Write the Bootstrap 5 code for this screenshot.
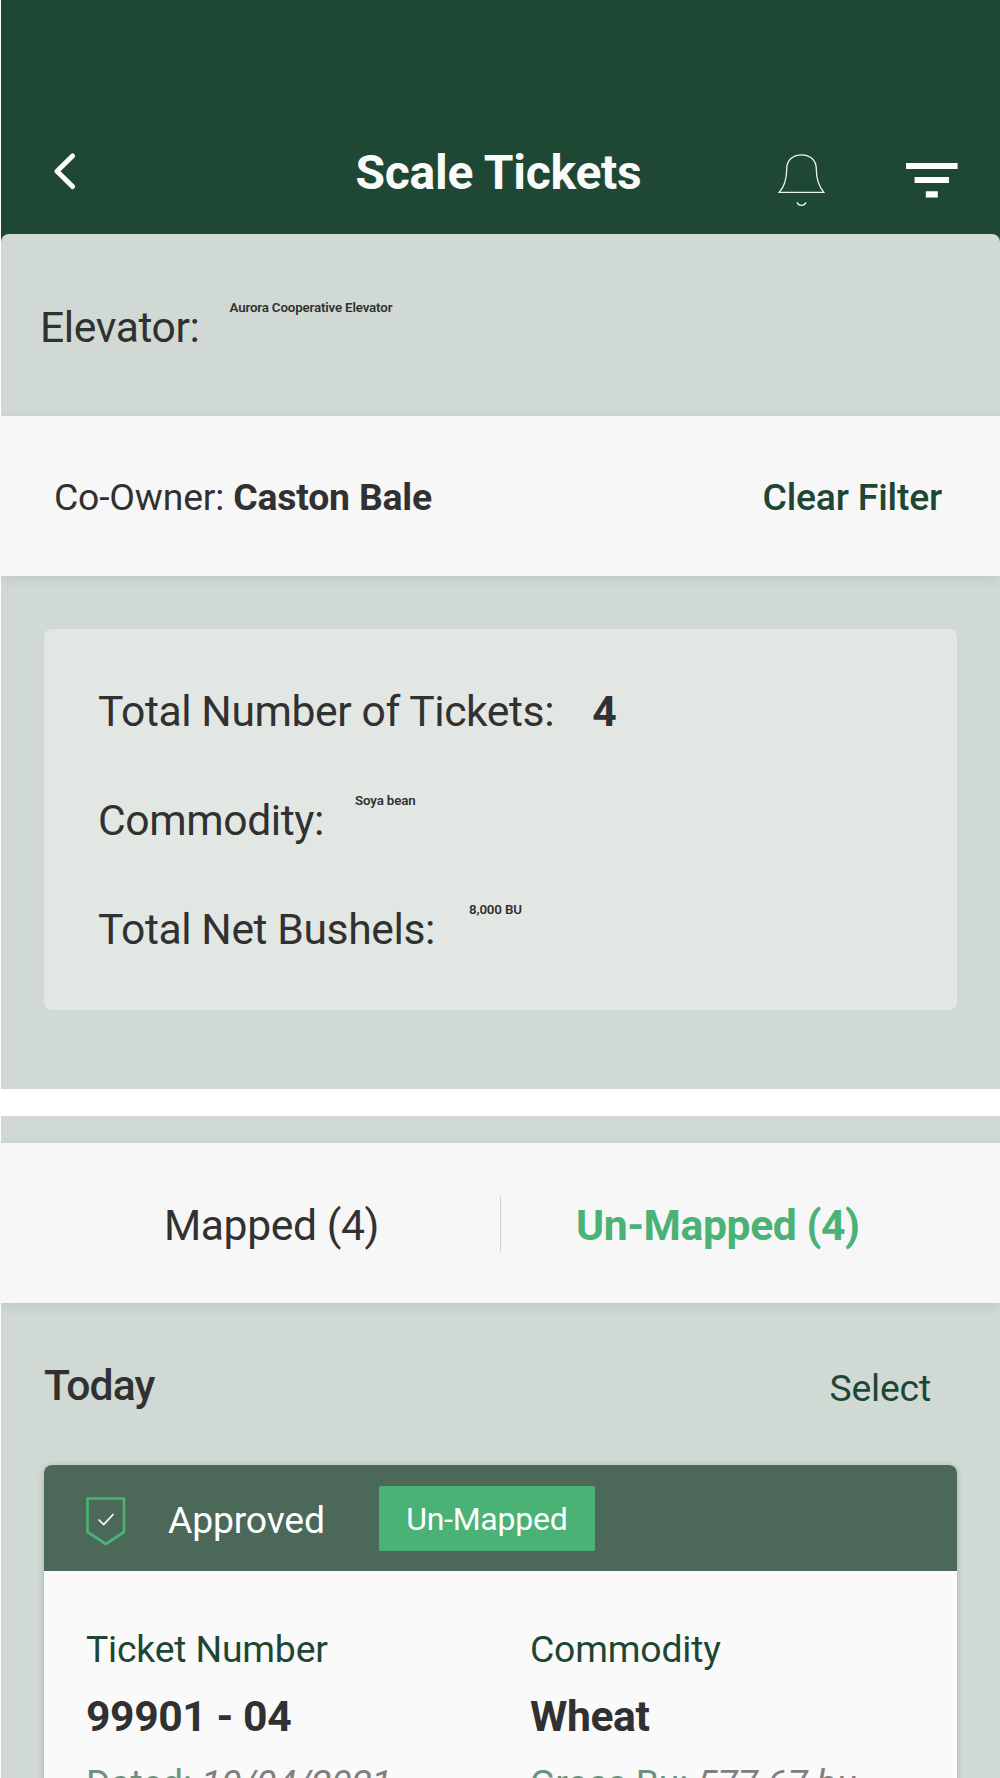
<!DOCTYPE html>
<html lang="en">
<head>
<meta charset="utf-8">
<meta name="viewport" content="width=device-width, initial-scale=1">
<title>Scale Tickets</title>
<link rel="stylesheet" href="https://cdn.jsdelivr.net/npm/bootstrap@5.3.0/dist/css/bootstrap.min.css">
<style>
  body { font-family: Roboto, "Liberation Sans", sans-serif; color: #313131; background: #fff; padding-left: 1px; height: 1778px; overflow: hidden; }
  .fs-title { font-size: 48px; line-height: 56px; padding: 2px 4px 0 0; letter-spacing: -.22px; }
  .fs-big { font-size: 42.67px; line-height: 50px; letter-spacing: -.41px; }
  .fs-mid { font-size: 37.33px; line-height: 44px; letter-spacing: -.18px; }
  .fs-tag { font-size: 32px; line-height: 38px; letter-spacing: -.26px; }
  .fs-tiny { font-size: 13.33px; line-height: 16px; font-weight: 600; letter-spacing: -.16px; }
  .medium { font-weight: 500; }
  .text-forest { color: #1d4733; }
  .text-leaf { color: #4ab274; }
  .bg-forest { background: #1e4834; }
  .bg-sage { background: #d0d9d3; }
  .topbar { display: grid; grid-template-columns: 1fr auto 1fr; height: 234px; padding-top: 110px; color: #fafafa; }
  .back { padding-left: 52px; }
  .actions { padding: 16px 42px 0 0; }
  .panel-top { height: 182px; border-radius: 8px 8px 0 0; padding: 66px 0 0 39px; }
  .panel-top .fs-big { margin-top: 2px; }
  .panel-top .fs-tiny { margin-left: 30px; }
  .bar { position: relative; background: #f7f7f7; box-shadow: 0 3px 12px rgba(0,0,0,.09); height: 160px; }
  .owner-bar { padding: 2px 58px 0 53px; margin-bottom: 53px; }
  .upper { height: 673px; }
  .summary { background: #e2e7e3; border-radius: 8px; margin: 0 43px; height: 381px; padding: 55px 0 0 54px; }
  .summary-row { height: 109px; }
  .summary-row .fs-big { margin-top: 2px; }
  .count { margin-left: 38px; }
  .crop-name { margin-left: 31px; }
  .net-total { margin-left: 34px; }
  .lower { margin-top: 27px; padding-top: 27px; height: 700px; }
  .tab-link { padding-top: 3px; }
  .tab-first { width: 499px; padding-left: 163px; }
  .tab-second { padding-left: 75px; }
  .divider { width: 1px; height: 56px; margin-top: 1px; background: #d0d0d0; }
  .day-row { height: 162px; padding: 0 69px 0 43px; }
  .day-name { letter-spacing: -.9px; padding-top: 2px; }
  .ticket { margin: 0 43px; height: 330px; border-radius: 8px; background: #fafafa; box-shadow: 0 1px 6px rgba(0,0,0,.2); overflow: hidden; }
  .ticket-head { height: 106px; background: #4b6858; padding-left: 42px; }
  .approved { margin-left: 42px; padding-top: 4px; }
  .tag { background: #4ab274; width: 216px; height: 65px; border-radius: 2px; color: #fff; margin-left: 54px; padding-top: 2px; }
  .ticket-body { padding: 56px 0 0 42px; }
  .ticket-col { width: 444px; }
  .ticket-value { margin: 20px 0; }
  .label-soft { color: #70907f; }
  .value-soft { color: #808080; }
</style>
</head>
<body>
<div class="bg-forest">
  <header class="topbar align-items-center">
    <div class="back">
      <svg width="22" height="40" viewBox="0 0 22 40" class="d-block" fill="none" stroke="#fff" stroke-width="5" stroke-linecap="round" stroke-linejoin="round"><path d="M19.500 4 4 19.200 19.500 34.500"/></svg>
    </div>
    <h1 class="fs-title fw-bold m-0">Scale Tickets</h1>
    <div class="actions d-flex justify-content-end">
      <svg width="180" height="60" viewBox="778 150 180 60" class="d-block" fill="none">
        <path d="M779.300 192.300C785 186 786.700 178 786.700 169C786.700 160 793 154.800 801.500 154.800S816.300 160 816.300 169C816.300 178 818.500 186 823.800 192.300ZM797 202.200C798.500 206.300 804.500 206.300 806 202.200" stroke="#eef2ef" stroke-width="1.300"/>
        <path d="M906 163h51.600v6H906zM914.600 177h34.400v6h-34.400zM925.800 191.300h12v6.200h-12z" fill="#fff"/>
      </svg>
    </div>
  </header>
  <section class="panel-top bg-sage d-flex align-items-start">
    <span class="fs-big">Elevator:</span>
    <span class="fs-tiny">Aurora Cooperative Elevator</span>
  </section>
</div>
<section class="upper bg-sage">
  <div class="bar owner-bar d-flex align-items-center justify-content-between">
    <span class="fs-mid">Co-Owner: <b>Caston Bale</b></span>
    <a class="fs-mid medium text-forest text-decoration-none" href="#">Clear Filter</a>
  </div>
  <div class="summary">
    <div class="summary-row d-flex align-items-start"><span class="fs-big">Total Number of Tickets:</span><b class="fs-big count">4</b></div>
    <div class="summary-row d-flex align-items-start"><span class="fs-big">Commodity:</span><span class="fs-tiny crop-name">Soya bean</span></div>
    <div class="summary-row d-flex align-items-start"><span class="fs-big">Total Net Bushels:</span><span class="fs-tiny net-total">8,000 BU</span></div>
  </div>
</section>
<section class="lower bg-sage">
  <nav class="bar d-flex align-items-center">
    <a class="tab-link tab-first fs-big text-reset text-decoration-none" href="#">Mapped (4)</a>
    <span class="divider"></span>
    <a class="tab-link tab-second fs-big fw-bold text-leaf text-decoration-none" href="#">Un-Mapped (4)</a>
  </nav>
  <div class="day-row d-flex justify-content-between align-items-center">
    <h2 class="day-name fs-big medium m-0">Today</h2>
    <a class="fs-mid text-forest text-decoration-none pt-2" href="#">Select</a>
  </div>
  <article class="ticket">
    <div class="ticket-head d-flex align-items-center">
      <svg class="mt-2" width="40" height="50" viewBox="0 0 40 50" fill="none"><path d="M1.500 1.500h36.500v33.500L19.800 47 1.500 35Z" stroke="#4ab274" stroke-width="2.700" stroke-linejoin="round"/><path d="m12.500 22.500 5.200 5L27.500 17" stroke="#fff" stroke-width="1.600"/></svg>
      <span class="approved fs-mid text-white">Approved</span>
      <span class="tag fs-tag d-flex align-items-center justify-content-center">Un-Mapped</span>
    </div>
    <div class="ticket-body d-flex">
      <div class="ticket-col">
        <div class="fs-mid text-forest">Ticket Number</div>
        <div class="ticket-value fs-big fw-bold">99901 - 04</div>
        <div class="fs-mid label-soft">Dated: <i class="value-soft">10/04/2021</i></div>
      </div>
      <div>
        <div class="fs-mid text-forest">Commodity</div>
        <div class="ticket-value fs-big fw-bold">Wheat</div>
        <div class="fs-mid label-soft">Gross Bu: <i class="value-soft">577.67 bu</i></div>
      </div>
    </div>
  </article>
</section>
<script src="https://cdn.jsdelivr.net/npm/bootstrap@5.3.0/dist/js/bootstrap.bundle.min.js"></script>
</body>
</html>
